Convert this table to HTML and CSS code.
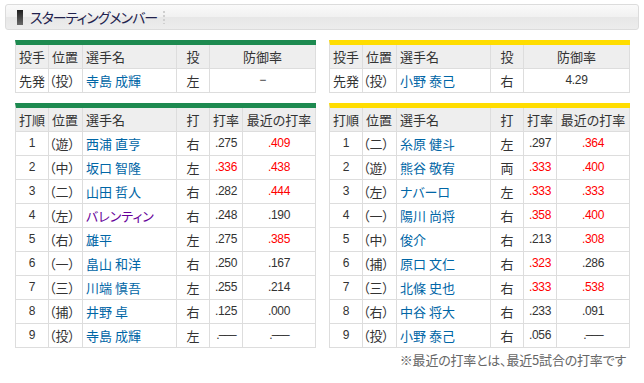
FILE: index.html
```html
<!DOCTYPE html>
<html lang="ja">
<head>
<meta charset="utf-8">
<title>スターティングメンバー</title>
<link rel="stylesheet" href="styles.css">
</head>
<body>
<div class="page">
  <div class="title-box">
    <span class="title-mark"></span>
    <h2 class="title">スターティングメンバー</h2>
    <span class="title-dots"></span>
  </div>

  <div class="teams">
    <div class="team team-home">
      <table class="lineup pitcher">
        <colgroup><col class="c1"><col class="c2"><col class="c3"><col class="c4"><col class="c5w"></colgroup>
        <tr><th>投手</th><th class="l">位置</th><th class="l">選手名</th><th>投</th><th>防御率</th></tr>
        <tr><td>先発</td><td class="l">（投）</td><td class="l"><a class="name">寺島 成輝</a></td><td>左</td><td class="num">−</td></tr>
      </table>

      <table class="lineup">
        <colgroup><col class="c1"><col class="c2"><col class="c3"><col class="c4"><col class="c5"><col class="c6"></colgroup>
        <tr><th>打順</th><th class="l">位置</th><th class="l">選手名</th><th>打</th><th>打率</th><th>最近の打率</th></tr>
        <tr><td class="num">1</td><td class="l">（遊）</td><td class="l"><a class="name">西浦 直亨</a></td><td>右</td><td class="num">.275</td><td class="num hot">.409</td></tr>
        <tr><td class="num">2</td><td class="l">（中）</td><td class="l"><a class="name">坂口 智隆</a></td><td>左</td><td class="num hot">.336</td><td class="num hot">.438</td></tr>
        <tr><td class="num">3</td><td class="l">（二）</td><td class="l"><a class="name">山田 哲人</a></td><td>右</td><td class="num">.282</td><td class="num hot">.444</td></tr>
        <tr><td class="num">4</td><td class="l">（左）</td><td class="l"><a class="name visited">バレンティン</a></td><td>右</td><td class="num">.248</td><td class="num">.190</td></tr>
        <tr><td class="num">5</td><td class="l">（右）</td><td class="l"><a class="name">雄平</a></td><td>左</td><td class="num">.275</td><td class="num hot">.385</td></tr>
        <tr><td class="num">6</td><td class="l">（一）</td><td class="l"><a class="name">畠山 和洋</a></td><td>右</td><td class="num">.250</td><td class="num">.167</td></tr>
        <tr><td class="num">7</td><td class="l">（三）</td><td class="l"><a class="name">川端 慎吾</a></td><td>左</td><td class="num">.255</td><td class="num">.214</td></tr>
        <tr><td class="num">8</td><td class="l">（捕）</td><td class="l"><a class="name">井野 卓</a></td><td>右</td><td class="num">.125</td><td class="num">.000</td></tr>
        <tr><td class="num">9</td><td class="l">（投）</td><td class="l"><a class="name">寺島 成輝</a></td><td>左</td><td class="num"><span class="nil">.–––</span></td><td class="num"><span class="nil">.–––</span></td></tr>
      </table>
    </div>

    <div class="team team-away">
      <table class="lineup pitcher">
        <colgroup><col class="c1"><col class="c2"><col class="c3"><col class="c4"><col class="c5w"></colgroup>
        <tr><th>投手</th><th class="l">位置</th><th class="l">選手名</th><th>投</th><th>防御率</th></tr>
        <tr><td>先発</td><td class="l">（投）</td><td class="l"><a class="name">小野 泰己</a></td><td>右</td><td class="num">4.29</td></tr>
      </table>

      <table class="lineup">
        <colgroup><col class="c1"><col class="c2"><col class="c3"><col class="c4"><col class="c5"><col class="c6"></colgroup>
        <tr><th>打順</th><th class="l">位置</th><th class="l">選手名</th><th>打</th><th>打率</th><th>最近の打率</th></tr>
        <tr><td class="num">1</td><td class="l">（二）</td><td class="l"><a class="name">糸原 健斗</a></td><td>左</td><td class="num">.297</td><td class="num hot">.364</td></tr>
        <tr><td class="num">2</td><td class="l">（遊）</td><td class="l"><a class="name">熊谷 敬宥</a></td><td>両</td><td class="num hot">.333</td><td class="num hot">.400</td></tr>
        <tr><td class="num">3</td><td class="l">（左）</td><td class="l"><a class="name">ナバーロ</a></td><td>左</td><td class="num hot">.333</td><td class="num hot">.333</td></tr>
        <tr><td class="num">4</td><td class="l">（一）</td><td class="l"><a class="name">陽川 尚将</a></td><td>右</td><td class="num hot">.358</td><td class="num hot">.400</td></tr>
        <tr><td class="num">5</td><td class="l">（中）</td><td class="l"><a class="name">俊介</a></td><td>右</td><td class="num">.213</td><td class="num hot">.308</td></tr>
        <tr><td class="num">6</td><td class="l">（捕）</td><td class="l"><a class="name">原口 文仁</a></td><td>右</td><td class="num hot">.323</td><td class="num">.286</td></tr>
        <tr><td class="num">7</td><td class="l">（三）</td><td class="l"><a class="name">北條 史也</a></td><td>右</td><td class="num hot">.333</td><td class="num hot">.538</td></tr>
        <tr><td class="num">8</td><td class="l">（右）</td><td class="l"><a class="name">中谷 将大</a></td><td>右</td><td class="num">.233</td><td class="num">.091</td></tr>
        <tr><td class="num">9</td><td class="l">（投）</td><td class="l"><a class="name">小野 泰己</a></td><td>右</td><td class="num">.056</td><td class="num"><span class="nil">.–––</span></td></tr>
      </table>
    </div>
  </div>

  <p class="note">※最近の打率とは、最近5試合の打率です</p>
</div>
</body>
</html>
```

FILE: styles.css
```css
html, body {
  margin: 0;
  padding: 0;
  background: #fff;
}

body {
  font-family: "Noto Sans CJK JP", "Noto Sans", sans-serif;
  font-feature-settings: "palt";
  font-size: 13px;
  color: #333;
}

.page {
  padding: 4px 0 0 5px;
  width: 634px;
}

.title-box {
  display: flex;
  align-items: center;
  height: 24px;
  border: 1px solid #dcdcdc;
  border-radius: 3px;
  background: linear-gradient(#fafafa 0%, #f1f1f1 48%, #e7e7e7 52%, #ededed 100%);
  padding-left: 11px;
}

.title-mark {
  display: block;
  width: 6px;
  height: 15px;
  background: linear-gradient(#1e1e1e, #6a6a6a);
  margin-right: 7px;
}

.title {
  margin: 0;
  font-size: 14px;
  font-weight: normal;
  color: #22224e;
  letter-spacing: -1px;
  line-height: 24px;
}

.title-dots {
  display: block;
  width: 2px;
  height: 13px;
  margin-left: 6px;
  background: repeating-linear-gradient(#cfcfcf 0 2px, transparent 2px 4px);
}

.teams {
  display: grid;
  grid-template-columns: 300px 300px;
  column-gap: 14px;
  margin: 10px 0 0 10px;
}

.team {
  display: flex;
  flex-direction: column;
  gap: 10px;
}

.lineup {
  width: 300px;
  table-layout: fixed;
  border-collapse: separate;
  border-spacing: 0;
  border-left: 1px solid #dddddd;
}

.team-home .lineup { border-top: 5px solid #1d8a50; }
.team-away .lineup { border-top: 5px solid #ffdd00; }

.c1 { width: 33px; }
.c2 { width: 34px; }
.c3 { width: 94px; }
.c4 { width: 33px; }
.c5 { width: 33px; }
.c5w { width: 106px; }
.c6 { width: 73px; }

.lineup th,
.lineup td {
  border-right: 1px solid #dddddd;
  border-bottom: 1px solid #dddddd;
  padding: 0;
  height: 23px;
  line-height: 23px;
  text-align: center;
  white-space: nowrap;
  overflow: hidden;
  font-weight: normal;
}

.lineup th {
  background: #eeeeee;
}

.lineup .l {
  text-align: left;
  padding-left: 3px;
}

.lineup td.l:nth-child(2) {
  padding-left: 0;
}

.num {
  font-family: "Liberation Sans", Arial, sans-serif;
  font-size: 12px;
  letter-spacing: -0.3px;
}

.nil {
  letter-spacing: -1px;
}

.hot { color: #ff0000; }

.name {
  color: #0066a6;
  text-decoration: none;
}

.name.visited { color: #660099; }

.note {
  margin: 0;
  width: 621px;
  text-align: right;
  color: #666;
  font-size: 13px;
  letter-spacing: -0.2px;
  line-height: 24px;
}
```
